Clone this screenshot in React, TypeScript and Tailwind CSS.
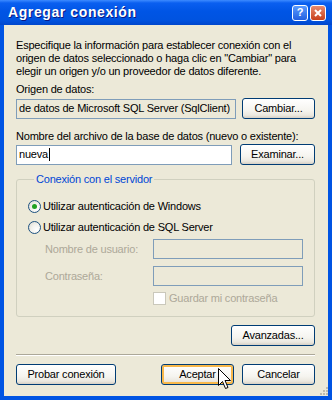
import React from "react";

const btn =
  "h-[21px] rounded-[3px] border border-[#003C74] bg-[linear-gradient(180deg,#ffffff_0%,#f5f4ef_60%,#ebe8df_85%,#d6d0c5_100%)] text-[11px] text-black flex items-center justify-center";

function Radio({ checked }: { checked?: boolean }) {
  return (
    <span className="w-[13px] h-[13px] rounded-full border border-[#1C5180] bg-[radial-gradient(circle_at_70%_70%,#ffffff_0%,#f2f1ec_50%,#d9d6cc_100%)] flex items-center justify-center shrink-0">
      {checked && <span className="w-[5px] h-[5px] rounded-full bg-[#21A121]" />}
    </span>
  );
}

export default function App() {
  return (
    <div
      className="w-[332px] h-[400px] bg-[#0054E3] flex flex-col relative overflow-hidden"
      style={{ fontFamily: '"Liberation Sans", Arial, sans-serif' }}
    >
      {/* Title bar */}
      <div className="h-[25px] shrink-0 flex items-center pl-[8px] pr-[6px] bg-[linear-gradient(180deg,#3d8bff_0%,#0a5ff0_12%,#0055e5_45%,#0053e0_80%,#0046cc_100%)]">
        <span className="text-white font-bold text-[14px] tracking-[0.6px] [text-shadow:1px_1px_0_#0a1883] flex-1">
          Agregar conexión
        </span>
        <div className="flex gap-[2px]">
          <span className="w-[16px] h-[16px] rounded-[3px] border border-white bg-[linear-gradient(180deg,#5a9bff,#2360e0)] text-white text-[11px] font-bold flex items-center justify-center">
            ?
          </span>
          <span className="w-[16px] h-[16px] rounded-[3px] border border-white bg-[linear-gradient(180deg,#e88b6f,#c8401c)] flex items-center justify-center">
            <svg width="8" height="8" viewBox="0 0 8 8">
              <path d="M1 1L7 7M7 1L1 7" stroke="white" strokeWidth="2" />
            </svg>
          </span>
        </div>
      </div>

      {/* Client area */}
      <div className="flex-1 mx-[4px] mb-[4px] bg-[#ECE9D8] pl-[12px] pr-[13px] pt-[14px] text-[11px] tracking-[-0.2px] text-black flex flex-col">
        <p className="leading-[13px]">
          Especifique la información para establecer conexión con el origen de datos seleccionado o haga clic en "Cambiar" para elegir un origen y/o un proveedor de datos diferente.
        </p>

        <div className="mt-[5px] leading-[13px]">Origen de datos:</div>
        <div className="mt-[2px] flex items-center justify-between">
          <div className="w-[220px] h-[20px] border border-[#7F9DB9] flex items-center pl-[2px] overflow-hidden whitespace-nowrap">
            de datos de Microsoft SQL Server (SqlClient)
          </div>
          <button className={`${btn} w-[73px]`}>Cambiar...</button>
        </div>

        <div className="mt-[11px] leading-[13px]">Nombre del archivo de la base de datos (nuevo o existente):</div>
        <div className="mt-[1px] flex items-center justify-between">
          <div className="w-[216px] h-[20px] border border-[#7F9DB9] bg-white flex items-center pl-[2px]">
            nueva<span className="w-px h-[13px] bg-black ml-px" />
          </div>
          <button className={`${btn} w-[75px]`}>Examinar...</button>
        </div>

        <fieldset className="mt-[8px] border border-[#D0D0BF] rounded-[3px] pl-[11px] pr-[11px] pb-[11px]">
          <legend className="ml-[6px] px-[2px] leading-[13px] text-[#0046D5]">Conexión con el servidor</legend>
          <div className="mt-[14px] flex items-center gap-[2px] leading-[13px]">
            <Radio checked />
            <span>Utilizar autenticación de Windows</span>
          </div>
          <div className="mt-[8px] flex items-center gap-[2px] leading-[13px]">
            <Radio />
            <span>Utilizar autenticación de SQL Server</span>
          </div>
          <div className="mt-[5px] flex items-center justify-between pl-[17px] text-[#ACA899]">
            <span>Nombre de usuario:</span>
            <div className="w-[150px] h-[20px] border border-[#7F9DB9]" />
          </div>
          <div className="mt-[7px] flex items-center justify-between pl-[17px] text-[#ACA899]">
            <span>Contraseña:</span>
            <div className="w-[150px] h-[20px] border border-[#7F9DB9]" />
          </div>
          <div className="mt-[6px] flex items-center pl-[125px] text-[#ACA899] leading-[13px]">
            <span className="w-[13px] h-[13px] border border-[#CAC8BB] bg-white mr-[3px]" />
            <span>Guardar mi contraseña</span>
          </div>
        </fieldset>

        <div className="mt-[8px] flex justify-end">
          <button className={`${btn} w-[84px]`}>Avanzadas...</button>
        </div>

        <div className="mt-[8px] h-px bg-[#ACA899] border-b border-white box-content" />

        <div className="mt-[8px] flex items-center">
          <button className={`${btn} w-[100px]`}>Probar conexión</button>
          <button className={`${btn} w-[73px] ml-[45px] shadow-[inset_0_0_0_2px_#F8B84A]`}>Aceptar</button>
          <button className={`${btn} w-[73px] ml-[8px]`}>Cancelar</button>
        </div>
      </div>

      {/* Mouse cursor */}
      <svg className="absolute left-[218px] top-[368px]" width="13" height="22" viewBox="0 0 13 22">
        <path d="M0.5 0.5V17.5L4.5 13.5L7.5 20.5L10 19.5L7 12.5H12.5Z" fill="white" stroke="black" strokeWidth="1" />
      </svg>

      {/* Resize grip */}
      <svg className="absolute left-[318px] top-[385px]" width="10" height="10" viewBox="0 0 10 10">
        {[[8, 0], [8, 3], [5, 3], [8, 6], [5, 6], [2, 6]].map(([x, y], i) => (
          <rect key={i} x={x} y={y + 2} width="2" height="2" fill="#C0BCAE" />
        ))}
      </svg>
    </div>
  );
}
